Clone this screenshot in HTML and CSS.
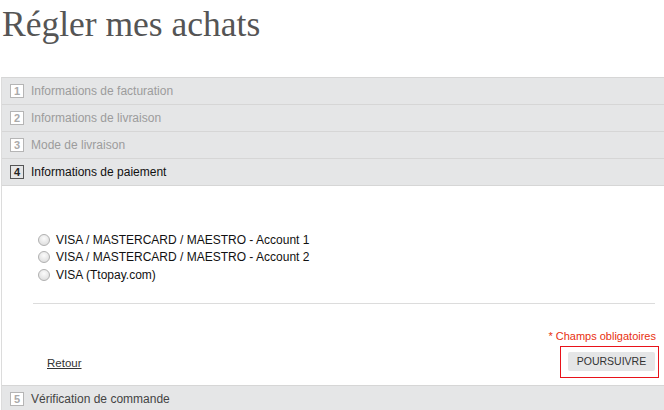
FILE: index.html
```html
<!DOCTYPE html>
<html lang="fr">
<head>
<meta charset="utf-8">
<title>Régler mes achats</title>
<link rel="stylesheet" href="styles.css">
</head>
<body>
<h1 class="page-title">Régler mes achats</h1>
<div class="checkout">
  <div class="step done"><span class="num">1</span><span class="label">Informations de facturation</span></div>
  <div class="step done"><span class="num">2</span><span class="label">Informations de livraison</span></div>
  <div class="step done"><span class="num">3</span><span class="label">Mode de livraison</span></div>
  <div class="step active"><span class="num">4</span><span class="label">Informations de paiement</span></div>
  <div class="step-body">
    <ul class="methods">
      <li><span class="radio"></span>VISA / MASTERCARD / MAESTRO - Account 1</li>
      <li><span class="radio"></span>VISA / MASTERCARD / MAESTRO - Account 2</li>
      <li><span class="radio"></span>VISA (Ttopay.com)</li>
    </ul>
    <div class="sep"></div>
    <p class="required">* Champs obligatoires</p>
    <div class="actions">
      <a class="back" href="#">Retour</a>
      <div class="btn-frame"><span class="btn">POURSUIVRE</span></div>
    </div>
  </div>
  <div class="step todo"><span class="num">5</span><span class="label">Vérification de commande</span></div>
</div>
</body>
</html>
```
FILE: styles.css
```css
html, body {
  margin: 0;
  padding: 0;
  background: #fff;
  overflow: hidden;
}
body {
  width: 664px;
  height: 410px;
  font-family: "Liberation Sans", Arial, sans-serif;
}
.page-title {
  margin: 0;
  padding: 4px 0 0 2px;
  height: 77px;
  box-sizing: border-box;
  font-family: "Liberation Serif", "Times New Roman", serif;
  font-weight: normal;
  font-size: 35.5px;
  line-height: 40px;
  color: #555;
}
.checkout {
  margin-left: 1px;
  border-left: 1px solid #dcdcdc;
  border-top: 1px solid #d6d6d6;
}
.step {
  display: flex;
  align-items: center;
  height: 26px;
  border-bottom: 1px solid #d6d6d6;
  background: #e5e6e7;
  padding-left: 8px;
  font-size: 12px;
}
.num {
  box-sizing: border-box;
  width: 14px;
  height: 14px;
  border: 1px solid #b5b5b5;
  background: #fff;
  color: #aaa;
  font-weight: bold;
  font-size: 11px;
  line-height: 12px;
  text-align: center;
  margin-right: 7px;
}
.done .label { color: #9c9c9c; }
.active .num {
  border-color: #555;
  background: #e5e6e7;
  color: #222;
}
.active .label { color: #111; }
.todo { border-bottom: none; border-top: 1px solid #d6d6d6; margin-top: -1px; }
.todo .label { color: #444; }
.step-body {
  height: 200px;
  box-sizing: border-box;
  padding: 45px 0 0 0;
  background: #fff;
}
.methods {
  list-style: none;
  margin: 0;
  padding: 0 0 0 36px;
}
.methods li {
  display: flex;
  align-items: center;
  height: 17.5px;
  font-size: 12px;
  color: #111;
}
.radio {
  box-sizing: border-box;
  width: 12px;
  height: 12px;
  border-radius: 50%;
  border: 1px solid #b0b0b0;
  background: radial-gradient(circle at 50% 35%, #fbfbfb, #d8d8d8);
  margin-right: 6px;
}
.sep {
  margin: 19px 0 0 31px;
  width: 622px;
  height: 1px;
  background: #dcdcdc;
}
.required {
  margin: 24px 0 0 0;
  width: 654px;
  text-align: right;
  font-size: 11px;
  line-height: 16px;
  color: #e8300f;
}
.actions {
  display: flex;
  justify-content: space-between;
  align-items: center;
  width: 657px;
  margin-top: 2px;
}
.back {
  margin-left: 45px;
  margin-top: 3px;
  font-size: 11.5px;
  color: #333;
  text-decoration: underline;
}
.btn-frame {
  box-sizing: border-box;
  width: 99px;
  height: 32px;
  border: 1px solid #e8121a;
  padding: 5px 3px 0 7px;
}
.btn {
  display: block;
  height: 19px;
  border-radius: 2px;
  background: #e5e6e7;
  font-size: 10.5px;
  line-height: 19px;
  text-align: center;
  color: #333;
}
```
